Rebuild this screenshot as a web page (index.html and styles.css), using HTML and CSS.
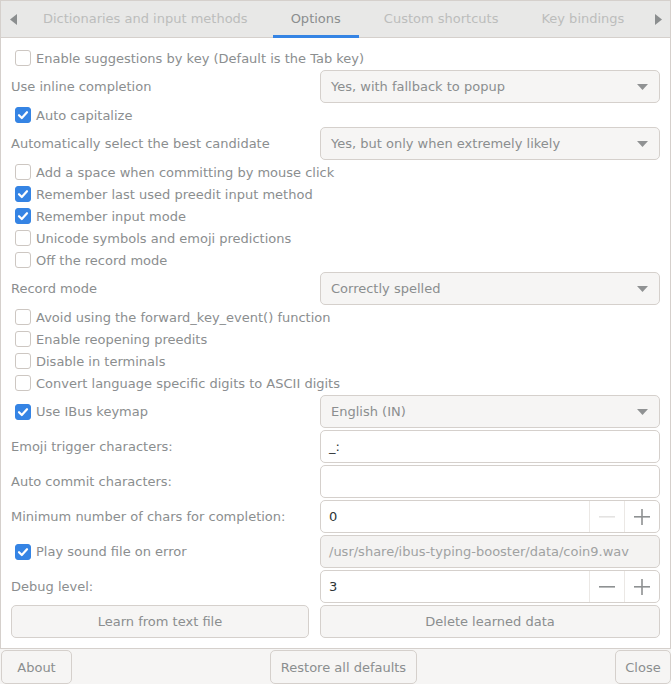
FILE: index.html
```html
<!DOCTYPE html>
<html>
<head>
<meta charset="utf-8">
<link rel="stylesheet" href="styles.css">
</head>
<body>
<div class="window">
  <div class="notebook">
    <div class="tabs">
      <span class="tab-arrow left"><svg width="7" height="11" viewBox="0 0 7 11"><polygon points="7,0 0,5.5 7,11" /></svg></span>
      <span class="tab">Dictionaries and input methods</span>
      <span class="tab active">Options</span>
      <span class="tab">Custom shortcuts</span>
      <span class="tab">Key bindings</span>
      <span class="tab-arrow right"><svg width="7" height="11" viewBox="0 0 7 11"><polygon points="0,0 7,5.5 0,11" /></svg></span>
    </div>
    <div class="page">
      <div class="check-row"><span class="check"></span><span>Enable suggestions by key (Default is the Tab key)</span></div>

      <div class="label">Use inline completion</div>
      <div class="combo"><span>Yes, with fallback to popup</span><svg class="combo-arrow" width="11" height="6" viewBox="0 0 11 6"><polygon points="0,0 11,0 5.5,6" /></svg></div>

      <div class="check-row"><span class="check checked"><svg width="16" height="16" viewBox="0 0 16 16"><path d="M4 8.2 L6.8 11 L12 5.2" /></svg></span><span>Auto capitalize</span></div>

      <div class="label">Automatically select the best candidate</div>
      <div class="combo"><span>Yes, but only when extremely likely</span><svg class="combo-arrow" width="11" height="6" viewBox="0 0 11 6"><polygon points="0,0 11,0 5.5,6" /></svg></div>

      <div class="check-row"><span class="check"></span><span>Add a space when committing by mouse click</span></div>
      <div class="check-row"><span class="check checked"><svg width="16" height="16" viewBox="0 0 16 16"><path d="M4 8.2 L6.8 11 L12 5.2" /></svg></span><span>Remember last used preedit input method</span></div>
      <div class="check-row"><span class="check checked"><svg width="16" height="16" viewBox="0 0 16 16"><path d="M4 8.2 L6.8 11 L12 5.2" /></svg></span><span>Remember input mode</span></div>
      <div class="check-row"><span class="check"></span><span>Unicode symbols and emoji predictions</span></div>
      <div class="check-row"><span class="check"></span><span>Off the record mode</span></div>

      <div class="label">Record mode</div>
      <div class="combo"><span>Correctly spelled</span><svg class="combo-arrow" width="11" height="6" viewBox="0 0 11 6"><polygon points="0,0 11,0 5.5,6" /></svg></div>

      <div class="check-row"><span class="check"></span><span>Avoid using the forward_key_event() function</span></div>
      <div class="check-row"><span class="check"></span><span>Enable reopening preedits</span></div>
      <div class="check-row"><span class="check"></span><span>Disable in terminals</span></div>
      <div class="check-row"><span class="check"></span><span>Convert language specific digits to ASCII digits</span></div>

      <div class="check-row single"><span class="check checked"><svg width="16" height="16" viewBox="0 0 16 16"><path d="M4 8.2 L6.8 11 L12 5.2" /></svg></span><span>Use IBus keymap</span></div>
      <div class="combo"><span>English (IN)</span><svg class="combo-arrow" width="11" height="6" viewBox="0 0 11 6"><polygon points="0,0 11,0 5.5,6" /></svg></div>

      <div class="label">Emoji trigger characters:</div>
      <div class="entry">_:</div>

      <div class="label">Auto commit characters:</div>
      <div class="entry"></div>

      <div class="label">Minimum number of chars for completion:</div>
      <div class="spin">
        <span class="spin-value">0</span>
        <span class="spin-btn disabled"><svg width="16" height="16" viewBox="0 0 16 16"><rect x="0" y="7" width="16" height="1.6" /></svg></span>
        <span class="spin-btn"><svg width="16" height="16" viewBox="0 0 16 16"><rect x="0" y="7" width="16" height="1.6" /><rect x="7.2" y="0" width="1.6" height="16" /></svg></span>
      </div>

      <div class="check-row single"><span class="check checked"><svg width="16" height="16" viewBox="0 0 16 16"><path d="M4 8.2 L6.8 11 L12 5.2" /></svg></span><span>Play sound file on error</span></div>
      <div class="entry insensitive">/usr/share/ibus-typing-booster/data/coin9.wav</div>

      <div class="label">Debug level:</div>
      <div class="spin">
        <span class="spin-value">3</span>
        <span class="spin-btn"><svg width="16" height="16" viewBox="0 0 16 16"><rect x="0" y="7" width="16" height="1.6" /></svg></span>
        <span class="spin-btn"><svg width="16" height="16" viewBox="0 0 16 16"><rect x="0" y="7" width="16" height="1.6" /><rect x="7.2" y="0" width="1.6" height="16" /></svg></span>
      </div>

      <div class="button">Learn from text file</div>
      <div class="button">Delete learned data</div>
    </div>
  </div>
  <div class="actions">
    <div class="button action-about">About</div>
    <div class="button action-restore">Restore all defaults</div>
    <div class="button action-close">Close</div>
  </div>
</div>
</body>
</html>
```
FILE: styles.css
```css
html, body {
  margin: 0;
  padding: 0;
}
body {
  background: #f6f5f4;
  font-family: "DejaVu Sans", sans-serif;
  font-size: 13px;
  color: #8b8e8f;
}
.window {
  width: 671px;
  height: 684px;
  display: flex;
  flex-direction: column;
  overflow: hidden;
}
.notebook {
  width: 671px;
  box-sizing: border-box;
  border: 1px solid #d5d0cc;
  background: #ffffff;
}
.tabs {
  height: 36px;
  background: #e8e8e7;
  border-bottom: 1px solid #d5d0cc;
  display: flex;
  align-items: stretch;
  gap: 7px;
}
.tab-arrow {
  flex: none;
  display: flex;
  align-items: center;
  fill: #8b8e8f;
  box-sizing: border-box;
}
.tab-arrow.left {
  width: 17px;
  padding-left: 9px;
}
.tab-arrow.right {
  width: 17px;
  margin-left: auto;
  padding-right: 8px;
  justify-content: flex-end;
}
.tab {
  flex: none;
  padding: 1px 18px 0;
  display: flex;
  align-items: center;
  color: #bcbdbc;
  white-space: nowrap;
  border-bottom: 3px solid transparent;
  margin-bottom: -1px;
}
.tab.active {
  color: #8b8e8f;
  border-bottom-color: #3584e4;
}
.page {
  padding: 10px;
  display: grid;
  grid-template-columns: 298px 340px;
  column-gap: 11px;
  row-gap: 2px;
}
.check-row {
  grid-column: 1 / span 2;
  height: 20px;
  display: flex;
  align-items: center;
  gap: 5px;
  padding-left: 4px;
  white-space: nowrap;
}
.check-row.single {
  grid-column: 1;
  height: 33px;
}
.check {
  width: 16px;
  height: 16px;
  box-sizing: border-box;
  border: 1px solid #cdc7c2;
  border-radius: 3px;
  background: #ffffff;
  flex: none;
  display: flex;
}
.check.checked {
  background: #3584e4;
  border-color: #3584e4;
}
.check svg {
  margin: -1px;
}
.check svg path {
  fill: none;
  stroke: #ffffff;
  stroke-width: 2.2;
  stroke-linecap: round;
  stroke-linejoin: round;
}
.label {
  height: 33px;
  display: flex;
  align-items: center;
  white-space: nowrap;
}
.combo, .entry, .spin, .button {
  height: 33px;
  box-sizing: border-box;
  border: 1px solid #d5d0cc;
  border-radius: 5px;
  display: flex;
  align-items: center;
}
.combo {
  background: #f6f5f4;
  padding: 0 11px 0 10px;
  justify-content: space-between;
}
.combo-arrow {
  fill: #909293;
}
.entry {
  background: #ffffff;
  padding: 0 8px;
  color: #2e3436;
}
.entry.insensitive {
  background: #f4f3f2;
  color: #a0a2a2;
}
.spin {
  background: #ffffff;
  color: #2e3436;
  overflow: hidden;
}
.spin-value {
  flex: 1;
  padding-left: 8px;
}
.spin-btn {
  width: 35px;
  height: 100%;
  box-sizing: border-box;
  border-left: 1px solid #ebe8e5;
  display: flex;
  align-items: center;
  justify-content: center;
  fill: #8e9192;
}
.spin-btn.disabled {
  fill: #e4e3e2;
}
.button {
  background: #f6f5f4;
  justify-content: center;
  white-space: nowrap;
}
.actions {
  display: flex;
  justify-content: space-between;
  padding: 1px 0 0 1px;
}
.actions .button {
  height: 34px;
}
.action-about {
  width: 71px;
}
.action-restore {
  width: 147px;
}
.action-close {
  width: 56px;
}
```
